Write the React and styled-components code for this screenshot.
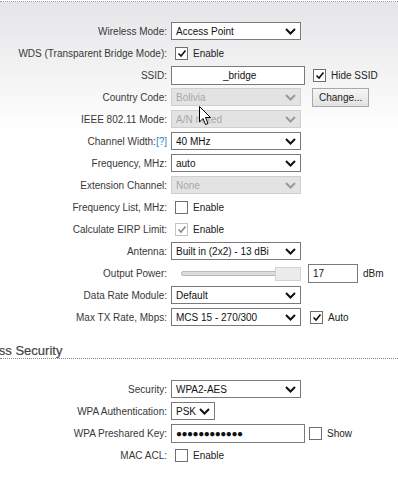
import React from "react";
import styled, { createGlobalStyle } from "styled-components";

const GlobalStyle = createGlobalStyle`
  html, body {
    margin: 0;
    padding: 0;
    background: #fff;
  }
  body {
    font-family: "Liberation Sans", Arial, sans-serif;
    font-size: 10px;
    color: #333;
  }
`;

const Page = styled.div`
  position: relative;
  width: 398px;
  height: 480px;
  overflow: hidden;
  border-top: 1px dotted #999;
  margin-top: 1px;
  background: linear-gradient(#e5e5e8 0px, #f3f3f4 70px, #ffffff 130px);
`;

const Form = styled.div`
  display: grid;
  grid-template-columns: 167px 1fr;
  column-gap: 4px;
  padding-top: ${(p) => p.top || 0}px;
`;

const Label = styled.div`
  height: 22px;
  display: flex;
  align-items: center;
  justify-content: flex-end;
  white-space: nowrap;
  color: #383838;
`;

const Help = styled.span`
  color: #2a86d1;
`;

const Cell = styled.div`
  height: 22px;
  display: flex;
  align-items: center;
`;

const SelectBox = styled.div`
  box-sizing: border-box;
  width: ${(p) => p.w || 130}px;
  height: 18px;
  display: flex;
  align-items: center;
  justify-content: space-between;
  padding: 0 4px 0 4px;
  border: 1px solid ${(p) => (p.disabled ? "#cfcfcf" : "#7a7a7a")};
  background: ${(p) => (p.disabled ? "#e3e3e3" : "#fff")};
  color: ${(p) => (p.disabled ? "#a8a8a8" : "#111")};
  white-space: nowrap;
`;

const TextBox = styled.div`
  box-sizing: border-box;
  width: ${(p) => p.w || 134}px;
  height: 19px;
  display: flex;
  align-items: center;
  padding-left: ${(p) => p.pad || 4}px;
  margin-left: ${(p) => p.ml || 0}px;
  border: 1px solid #7a7a7a;
  background: #fff;
  color: #111;
  white-space: nowrap;
  letter-spacing: ${(p) => (p.dots ? "-0.5px" : "0")};
`;

const Box = styled.span`
  box-sizing: border-box;
  width: 13px;
  height: 13px;
  display: inline-flex;
  align-items: center;
  justify-content: center;
  border: 1px solid ${(p) => (p.disabled ? "#c4c4c4" : "#6f6f6f")};
  background: #fff;
  flex: none;
`;

const CheckWrap = styled.span`
  display: inline-flex;
  align-items: center;
  gap: 5px;
  margin-left: ${(p) => p.ml || 4}px;
  color: #222;
`;

const Button = styled.div`
  box-sizing: border-box;
  height: 19px;
  padding: 0 6px;
  margin-left: 11px;
  display: flex;
  align-items: center;
  border: 1px solid #a8a8a8;
  background: linear-gradient(#f6f6f6, #e2e2e2);
  color: #222;
`;

const Track = styled.div`
  position: relative;
  width: 120px;
  height: 13px;
  margin-left: 10px;
  display: flex;
  align-items: center;
`;

const Rail = styled.div`
  width: 100%;
  height: 3px;
  border: 1px solid #b8b8b8;
  border-radius: 2px;
  background: #dcdcdc;
`;

const Thumb = styled.div`
  position: absolute;
  right: 0;
  top: 0;
  width: 24px;
  height: 12px;
  border: 1px solid #d2d2d2;
  background: #ececec;
`;

const Unit = styled.span`
  margin-left: 5px;
  color: #222;
`;

const Section = styled.div`
  margin-top: 14px;
  height: 16px;
  border-bottom: 1px dotted #888;
  display: flex;
  align-items: flex-end;
  overflow: hidden;
`;

const SectionTitle = styled.div`
  font-size: 13px;
  color: #444;
  text-indent: -38px;
  white-space: nowrap;
  line-height: 14px;
  -webkit-text-stroke: 0.2px #444;
`;

const Cursor = styled.svg`
  position: absolute;
  left: 199px;
  top: 104px;
`;

const Chevron = ({ disabled }) => (
  <svg width="11" height="7" viewBox="0 0 11 7">
    <polyline
      points="1,1 5.5,5.5 10,1"
      fill="none"
      stroke={disabled ? "#9a9a9a" : "#111"}
      strokeWidth="2"
    />
  </svg>
);

const Select = ({ w, disabled, children }) => (
  <SelectBox w={w} disabled={disabled}>
    <span>{children}</span>
    <Chevron disabled={disabled} />
  </SelectBox>
);

const Check = ({ checked, disabled, label, ml }) => (
  <CheckWrap ml={ml}>
    <Box disabled={disabled}>
      {checked && (
        <svg width="10" height="9" viewBox="0 0 10 9">
          <polyline
            points="1.5,4.5 4,7 8.5,1.5"
            fill="none"
            stroke={disabled ? "#8a8a8a" : "#111"}
            strokeWidth="1.6"
          />
        </svg>
      )}
    </Box>
    {label && <span>{label}</span>}
  </CheckWrap>
);

const App = () => {
  return (
    <Page>
      <GlobalStyle />
      <Form top={18}>
        <Label>Wireless Mode:</Label>
        <Cell>
          <Select>Access Point</Select>
        </Cell>

        <Label>WDS (Transparent Bridge Mode):</Label>
        <Cell>
          <Check checked label="Enable" />
        </Cell>

        <Label>SSID:</Label>
        <Cell>
          <TextBox pad={51}>_bridge</TextBox>
          <Check checked label="Hide SSID" ml={8} />
        </Cell>

        <Label>Country Code:</Label>
        <Cell>
          <Select disabled>Bolivia</Select>
          <Button>Change...</Button>
        </Cell>

        <Label>IEEE 802.11 Mode:</Label>
        <Cell>
          <Select disabled>A/N mixed</Select>
        </Cell>

        <Label>
          Channel Width:<Help>[?]</Help>
        </Label>
        <Cell>
          <Select>40 MHz</Select>
        </Cell>

        <Label>Frequency, MHz:</Label>
        <Cell>
          <Select>auto</Select>
        </Cell>

        <Label>Extension Channel:</Label>
        <Cell>
          <Select disabled>None</Select>
        </Cell>

        <Label>Frequency List, MHz:</Label>
        <Cell>
          <Check label="Enable" />
        </Cell>

        <Label>Calculate EIRP Limit:</Label>
        <Cell>
          <Check checked disabled label="Enable" />
        </Cell>

        <Label>Antenna:</Label>
        <Cell>
          <Select>Built in (2x2) - 13 dBi</Select>
        </Cell>

        <Label>Output Power:</Label>
        <Cell>
          <Track>
            <Rail />
            <Thumb />
          </Track>
          <TextBox w={50} ml={7}>
            17
          </TextBox>
          <Unit>dBm</Unit>
        </Cell>

        <Label>Data Rate Module:</Label>
        <Cell>
          <Select>Default</Select>
        </Cell>

        <Label>Max TX Rate, Mbps:</Label>
        <Cell>
          <Select>MCS 15 - 270/300</Select>
          <Check checked label="Auto" ml={9} />
        </Cell>
      </Form>

      <Section>
        <SectionTitle>Wireless Security</SectionTitle>
      </Section>

      <Form top={19}>
        <Label>Security:</Label>
        <Cell>
          <Select>WPA2-AES</Select>
        </Cell>

        <Label>WPA Authentication:</Label>
        <Cell>
          <Select w={44}>PSK</Select>
        </Cell>

        <Label>WPA Preshared Key:</Label>
        <Cell>
          <TextBox w={134} dots>
            ●●●●●●●●●●●●
          </TextBox>
          <Check label="Show" ml={4} />
        </Cell>

        <Label>MAC ACL:</Label>
        <Cell>
          <Check label="Enable" />
        </Cell>
      </Form>

      <Cursor width="12" height="20" viewBox="0 0 12 20">
        <path
          d="M0.5 0.5 L0.5 16 L4 12.5 L6.5 18.5 L9 17.5 L6.5 11.5 L11.5 11.5 Z"
          fill="#fff"
          stroke="#000"
          strokeWidth="1"
        />
      </Cursor>
    </Page>
  );
};

export default App;
